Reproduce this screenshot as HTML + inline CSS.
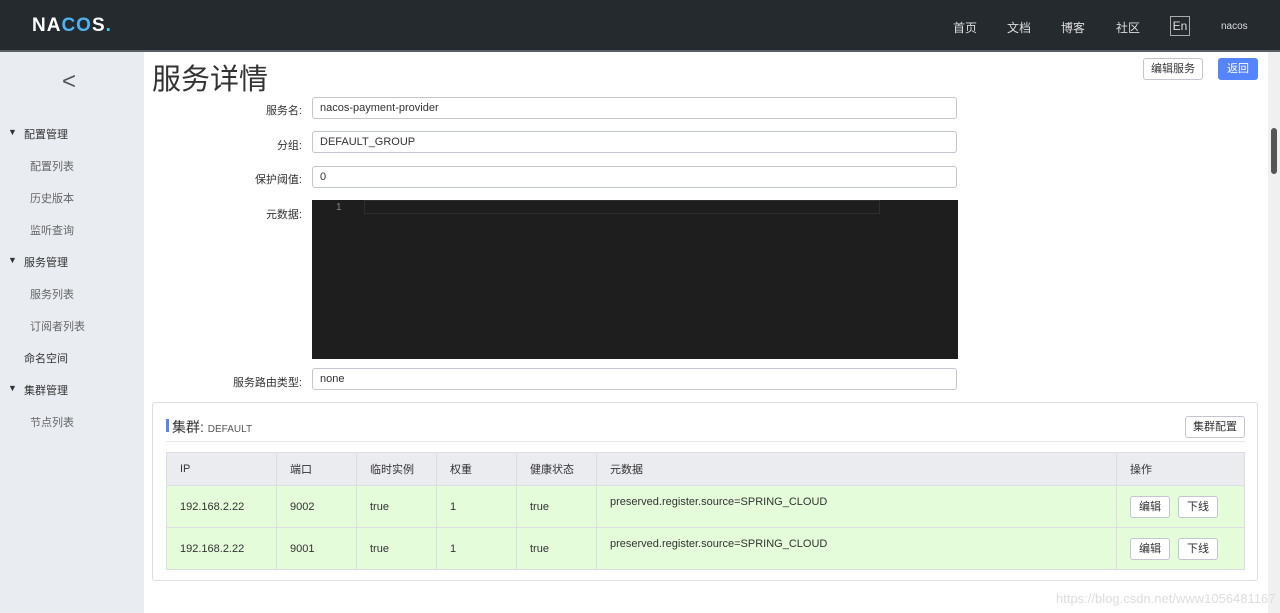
<!DOCTYPE html>
<html><head><meta charset="utf-8"><style>
*{box-sizing:border-box;margin:0;padding:0}
body{width:1280px;height:613px;overflow:hidden;position:relative;background:#fff;font-family:"Liberation Sans","Noto Sans CJK SC",sans-serif;font-size:12px;color:#333}
.hdr{position:absolute;left:0;top:0;width:1280px;height:52px;background:#252a2f;border-bottom:2px solid #5a5f66}
.logo{position:absolute;left:32px;top:15px;color:#fff;font-weight:bold;font-size:19px;letter-spacing:1px}
.nav{position:absolute;top:19px;color:#ddd;font-size:12px}
.en{position:absolute;left:1170px;top:16px;width:20px;height:20px;border:1px solid #aaa;color:#ddd;font-size:12px;text-align:center;line-height:18px}
.side{position:absolute;left:0;top:52px;width:144px;height:561px;background:#e9ecf1}
.side div{position:absolute;font-size:11px}
.main{position:absolute;left:144px;top:52px;width:1124px;height:561px;background:#fff}
.sb{position:absolute;left:1268px;top:52px;width:12px;height:561px;background:#f0f0f0}
.lbl{position:absolute;width:150px;left:152px;text-align:right;font-size:11px;color:#333}
.inp{position:absolute;left:312px;width:645px;height:22px;border:1px solid #c4c6cf;border-radius:3px;padding-left:7px;line-height:21px;font-size:11px;color:#333}
.btn{position:absolute;border:1px solid #c4c6cf;border-radius:3px;background:#fff;text-align:center;font-size:11px;color:#333}
table{position:absolute;left:166px;top:452px;width:1079px;border-collapse:collapse;font-size:11px}
td,th{border:1px solid #dcdee3;text-align:left;padding-left:13px;font-weight:normal}
th{background:#ebecf0;height:33px}
td{background:#e4fcd9;height:42px}
</style></head><body>
<div class="hdr">
<div class="logo">NA<span style="color:#4fb3f0">CO</span>S<span style="color:#35c9e8">.</span></div>
<div class="nav" style="left:953px">首页</div>
<div class="nav" style="left:1007px">文档</div>
<div class="nav" style="left:1061px">博客</div>
<div class="nav" style="left:1116px">社区</div>
<div class="en">En</div>
<div class="nav" style="left:1221px;font-size:10px;top:21px">nacos</div>
</div>
<div class="side">
<div style="left:62px;top:16px;font-size:24px;color:#555;font-weight:300">&lt;</div>
<div style="left:8px;top:75px;font-size:9px">▼</div><div style="left:24px;top:74px">配置管理</div>
<div style="left:30px;top:106px;color:#666">配置列表</div>
<div style="left:30px;top:138px;color:#666">历史版本</div>
<div style="left:30px;top:170px;color:#666">监听查询</div>
<div style="left:8px;top:203px;font-size:9px">▼</div><div style="left:24px;top:202px">服务管理</div>
<div style="left:30px;top:234px;color:#666">服务列表</div>
<div style="left:30px;top:266px;color:#666">订阅者列表</div>
<div style="left:24px;top:298px">命名空间</div>
<div style="left:8px;top:331px;font-size:9px">▼</div><div style="left:24px;top:330px">集群管理</div>
<div style="left:30px;top:362px;color:#666">节点列表</div>
</div>
<div class="main"></div>
<div class="sb"><div style="position:absolute;left:3px;top:76px;width:6px;height:46px;background:#555;border-radius:3px"></div></div>
<div style="position:absolute;left:152px;top:56px;font-size:29px;color:#333">服务详情</div>
<div class="btn" style="left:1143px;top:58px;width:60px;height:22px;line-height:20px">编辑服务</div>
<div class="btn" style="left:1218px;top:58px;width:40px;height:22px;line-height:20px;background:#5584ff;border-color:#5584ff;color:#fff">返回</div>
<div class="lbl" style="top:102px">服务名:</div><div class="inp" style="top:97px">nacos-payment-provider</div>
<div class="lbl" style="top:137px">分组:</div><div class="inp" style="top:131px">DEFAULT_GROUP</div>
<div class="lbl" style="top:171px">保护阈值:</div><div class="inp" style="top:166px">0</div>
<div class="lbl" style="top:206px">元数据:</div>
<div style="position:absolute;left:312px;top:200px;width:646px;height:159px;background:#1e1e1e"><div style="position:absolute;left:24px;top:2px;color:#888;font-size:10px">1</div><div style="position:absolute;left:52px;top:0;width:516px;height:14px;border:1px solid #2e2e2e"></div></div>
<div class="lbl" style="top:374px">服务路由类型:</div><div class="inp" style="top:368px">none</div>
<div style="position:absolute;left:152px;top:402px;width:1106px;height:179px;border:1px solid #dcdee3;border-radius:3px"></div>
<div style="position:absolute;left:166px;top:419px;width:3px;height:13px;background:#5584ff"></div>
<div style="position:absolute;left:172px;top:417px;font-size:14px">集群: <span style="font-size:10px;color:#555">DEFAULT</span></div>
<div style="position:absolute;left:166px;top:441px;width:1079px;height:1px;background:#e6e7eb"></div>
<div class="btn" style="left:1185px;top:416px;width:60px;height:22px;line-height:20px">集群配置</div>
<table>
<tr><th style="width:110px">IP</th><th style="width:80px">端口</th><th style="width:80px">临时实例</th><th style="width:80px">权重</th><th style="width:80px">健康状态</th><th style="width:520px">元数据</th><th>操作</th></tr>
<tr><td>192.168.2.22</td><td>9002</td><td>true</td><td>1</td><td>true</td><td style="vertical-align:top;padding-top:10px">preserved.register.source=SPRING_CLOUD</td><td></td></tr>
<tr><td>192.168.2.22</td><td>9001</td><td>true</td><td>1</td><td>true</td><td style="vertical-align:top;padding-top:10px">preserved.register.source=SPRING_CLOUD</td><td></td></tr>
</table>
<div class="btn" style="left:1130px;top:496px;width:40px;height:22px;line-height:20px">编辑</div>
<div class="btn" style="left:1178px;top:496px;width:40px;height:22px;line-height:20px">下线</div>
<div class="btn" style="left:1130px;top:538px;width:40px;height:22px;line-height:20px">编辑</div>
<div class="btn" style="left:1178px;top:538px;width:40px;height:22px;line-height:20px">下线</div>
<div style="position:absolute;left:1056px;top:591px;font-size:13px;color:#ddd">https://blog.csdn.net/www1056481167</div>
</body></html>
